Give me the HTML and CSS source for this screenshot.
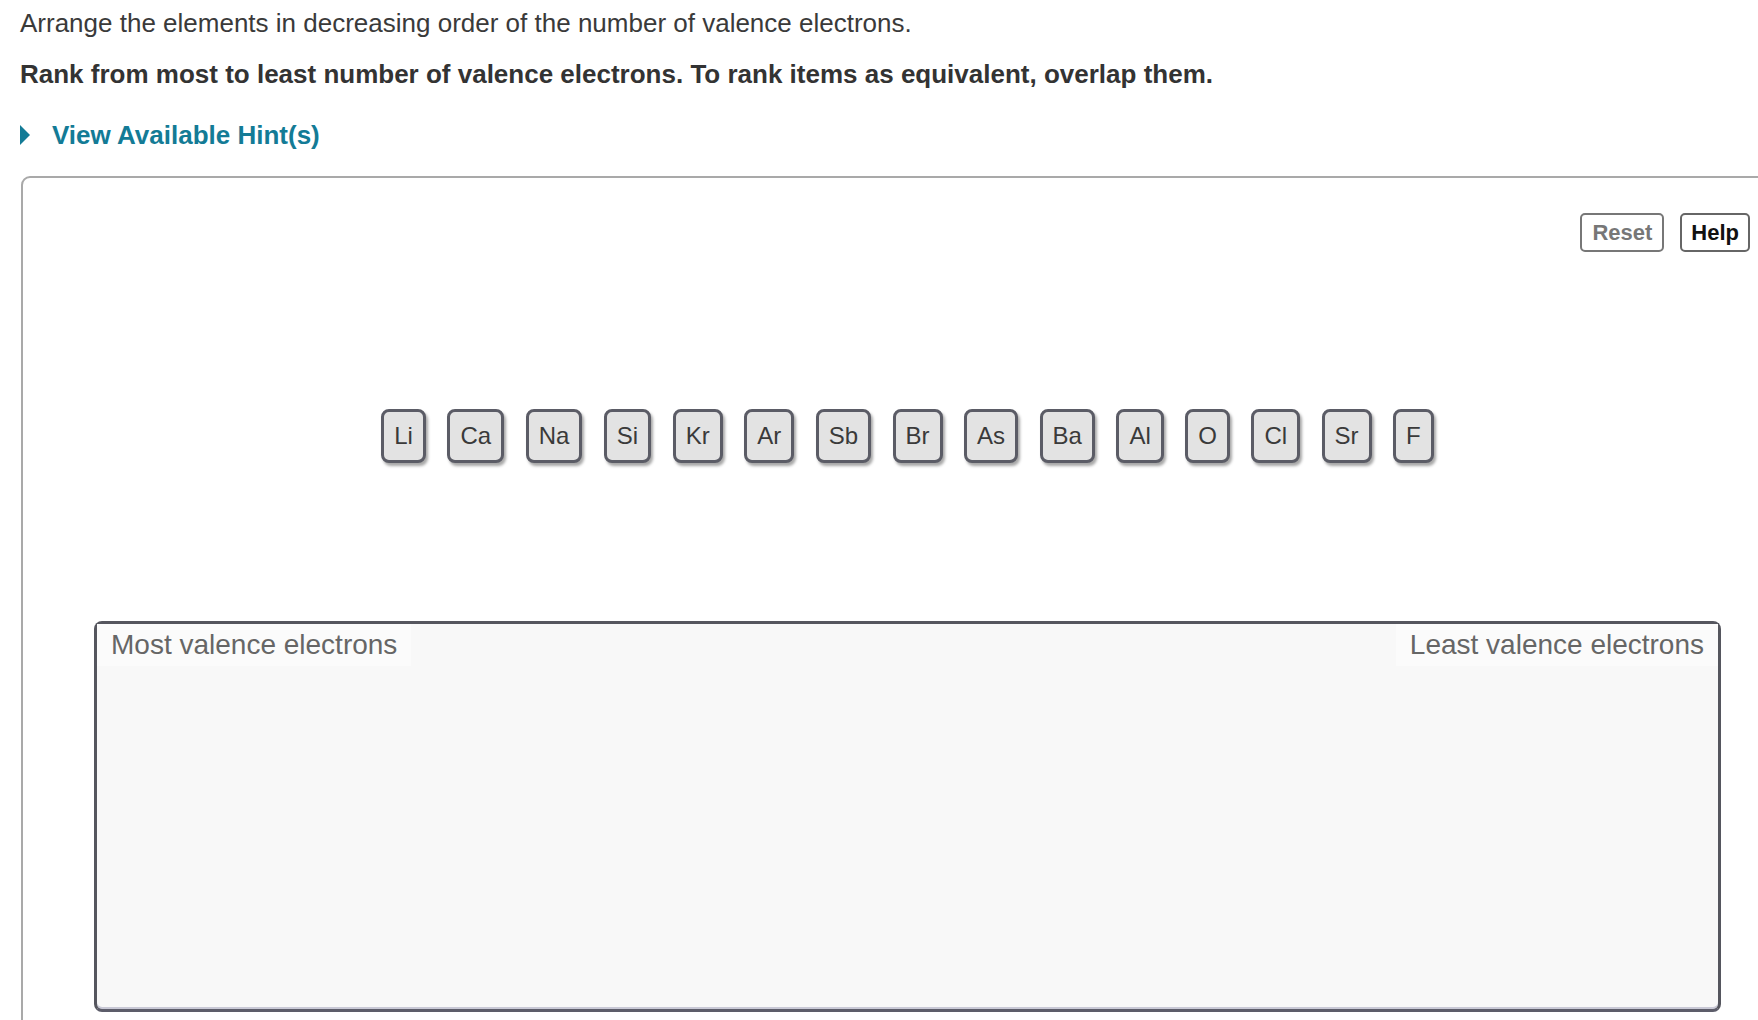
FILE: index.html
```html
<!DOCTYPE html>
<html>
<head>
<meta charset="utf-8">
<link rel="stylesheet" href="styles.css">
</head>
<body>
<div class="intro">
  <p class="q">Arrange the elements in decreasing order of the number of valence electrons.</p>
  <p class="instr">Rank from most to least number of valence electrons. To rank items as equivalent, overlap them.</p>
  <div class="hint"><span class="tri"></span><span class="hint-text">View Available Hint(s)</span></div>
</div>
<div class="panel">
  <div class="tools">
    <button class="btn reset">Reset</button>
    <button class="btn help">Help</button>
  </div>
  <div class="tiles">
    <span class="tile">Li</span>
    <span class="tile">Ca</span>
    <span class="tile">Na</span>
    <span class="tile">Si</span>
    <span class="tile">Kr</span>
    <span class="tile">Ar</span>
    <span class="tile">Sb</span>
    <span class="tile">Br</span>
    <span class="tile">As</span>
    <span class="tile">Ba</span>
    <span class="tile">Al</span>
    <span class="tile">O</span>
    <span class="tile">Cl</span>
    <span class="tile">Sr</span>
    <span class="tile">F</span>
  </div>
  <div class="rank">
    <span class="lbl">Most valence electrons</span>
    <span class="lbl">Least valence electrons</span>
  </div>
</div>
</body>
</html>
```
FILE: styles.css
```css
html, body {
  margin: 0;
  padding: 0;
  overflow: hidden;
  background: #fff;
  font-family: "Liberation Sans", Arial, sans-serif;
  color: #333;
}
.intro {
  padding: 8px 0 0 20px;
}
.q {
  margin: 0;
  font-size: 26px;
  line-height: 30px;
  color: #3a3a3a;
}
.instr {
  margin: 21px 0 0 0;
  font-size: 26px;
  line-height: 30px;
  font-weight: bold;
  color: #333;
}
.hint {
  margin-top: 31px;
  display: flex;
  align-items: center;
  height: 30px;
}
.tri {
  width: 0;
  height: 0;
  border-left: 10px solid #137b96;
  border-top: 10px solid transparent;
  border-bottom: 10px solid transparent;
  margin-right: 22px;
}
.hint-text {
  font-size: 26px;
  line-height: 30px;
  font-weight: bold;
  color: #137b96;
}
.panel {
  margin: 26px 0 0 21px;
  width: 1769px;
  height: 900px;
  border: 2px solid #a9a9a9;
  border-radius: 9px 9px 0 0;
  box-sizing: border-box;
}
.tools {
  display: flex;
  justify-content: flex-end;
  gap: 16px;
  padding: 35px 38px 0 0;
}
.btn {
  font-family: "Liberation Sans", Arial, sans-serif;
  font-size: 22px;
  font-weight: bold;
  height: 39px;
  padding: 0 9px;
  background: #fff;
  border: 2px solid #777;
  border-radius: 5px;
}
.reset { color: #777; padding: 0 10px; }
.help { color: #111; border-color: #666; }
.tiles {
  margin: 157px 0 0 71px;
  width: 1627px;
  display: flex;
  justify-content: center;
  gap: 21.5px;
}
.tile {
  height: 54px;
  box-sizing: border-box;
  padding: 0 10px;
  border: 3px solid #5b5c66;
  border-radius: 8px;
  background: #e3e3e3;
  font-size: 24px;
  line-height: 47px;
  color: #3a3a3a;
  box-shadow: 2px 3px 3px rgba(0,0,0,0.35);
}
.rank {
  margin: 158px 0 0 71px;
  width: 1627px;
  height: 391px;
  box-sizing: border-box;
  border: 3px solid #55565e;
  border-bottom-color: #5d5d6a;
  border-radius: 8px;
  background: #f8f8f8;
  display: flex;
  justify-content: space-between;
  align-items: flex-start;
  box-shadow: inset 0 -2px 0 #c9c9d6;
}
.lbl {
  background: #fbfbfb;
  color: #666;
  font-size: 28px;
  line-height: 42px;
  padding: 0 14px;
}
```
